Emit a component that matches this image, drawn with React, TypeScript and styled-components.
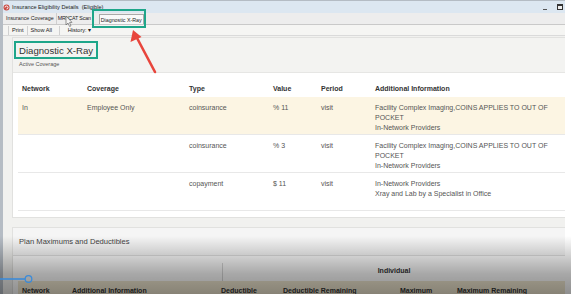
import React from "react";
import styled, { createGlobalStyle } from "styled-components";

const Global = createGlobalStyle`
  html, body { margin: 0; padding: 0; background: #fff; }
  body { font-family: "Liberation Sans", Arial, sans-serif; }
`;

const Stage = styled.div`
  position: relative;
  width: 571px;
  height: 294px;
  overflow: hidden;
  background: #ffffff;
`;

const Window = styled.div`
  width: 565px;
  height: 294px;
  display: flex;
  flex-direction: column;
  background: #f1f1ef;
  border-left: 3px solid #b5bcc4;
  box-sizing: border-box;
`;

const TitleBar = styled.div`
  height: 13px;
  flex: none;
  display: flex;
  align-items: center;
  gap: 2px;
  padding: 0 2px 0 0;
  background: #dce7f1;
  border-top: 1px solid #b4bcc4;
  box-sizing: border-box;
  font-size: 5.6px;
  color: #222;
`;

const TitleText = styled.span`
  flex: 1;
  white-space: nowrap;
`;

const WinButtons = styled.div`
  display: flex;
  align-items: center;
  gap: 10px;
`;

const MinBtn = styled.span`
  width: 4px;
  height: 1px;
  margin-top: 4px;
  background: #555;
`;

const MaxBtn = styled.span`
  width: 4px;
  height: 3px;
  border: 1px solid #333;
  border-top-width: 2px;
  background: #eee;
`;

const TabBar = styled.div`
  height: 12px;
  flex: none;
  display: flex;
  align-items: flex-end;
  padding-left: 1px;
  background: #ededed;
  border-bottom: 1px solid #c9c9c9;
  box-sizing: border-box;
`;

const Tab = styled.div<{ $active?: boolean; $tight?: boolean }>`
  height: ${(p) => (p.$active ? 10 : 11)}px;
  line-height: ${(p) => (p.$active ? 10 : 11)}px;
  padding: 0 ${(p) => (p.$tight ? 1 : 2)}px;
  font-size: 5.3px;
  letter-spacing: ${(p) => (p.$tight ? "-0.15px" : "0")};
  color: #222;
  white-space: nowrap;
  box-sizing: border-box;
  border-right: 1px solid #cfcfcf;
  ${(p) =>
    p.$active
      ? `background:#f9f9f9;border:1px solid #a9a9a9;border-bottom:none;margin-left:6px;padding:0 1px;`
      : ""}
`;

const Toolbar = styled.div`
  height: 11px;
  flex: none;
  display: flex;
  align-items: center;
  padding-left: 5px;
  background: #f5f5f3;
  border-bottom: 1px solid #dadada;
  box-sizing: border-box;
  font-size: 5.6px;
  color: #222;
`;

const ToolItem = styled.span<{ $gap?: number }>`
  padding: 0 3px;
  margin-left: ${(p) => p.$gap ?? 0}px;
  border-left: 1px solid #d0d0d0;
  line-height: 9px;
  white-space: nowrap;
`;

const Content = styled.div`
  flex: 1;
  display: flex;
  flex-direction: column;
  gap: 9px;
  padding: 1px 0 0 9px;
  background: #f1f1ef;
  min-height: 0;
`;

const Card = styled.div`
  background: #ffffff;
  border: 1px solid #e1e1df;
  border-right: none;
  display: flex;
  flex-direction: column;
  flex: none;
`;

const CardHead = styled.div`
  height: 35px;
  padding: 2px 0 0 1px;
  background: #f3f3f1;
  border-bottom: 1px solid #e6e6e4;
  box-sizing: border-box;
`;

const TitleBox = styled.div`
  display: inline-block;
  border: 2px solid #1fa68a;
  padding: 2px 3px 1px 3px;
  font-size: 9.6px;
  color: #333;
  line-height: 11px;
`;

const SubTitle = styled.div`
  margin: 2px 0 0 5px;
  font-size: 5.5px;
  color: #555;
`;

const Table = styled.div`
  margin: 7px 0 6px 5px;
  display: flex;
  flex-direction: column;
`;

const cols = "65px 102px 84px 48px 54px 1fr";

const HeadRow = styled.div`
  display: grid;
  grid-template-columns: ${cols};
  height: 17px;
  align-items: center;
  font-size: 7px;
  font-weight: bold;
  color: #333;
`;

const Row = styled.div<{ $hl?: boolean }>`
  display: grid;
  grid-template-columns: ${cols};
  height: 38px;
  padding-top: 6px;
  box-sizing: border-box;
  border-bottom: 1px solid #e8e8e8;
  background: ${(p) => (p.$hl ? "#fcf5e3" : "#ffffff")};
  font-size: 7px;
  line-height: 10px;
  color: #555;
`;

const Cell = styled.div`
  padding-left: 4px;
`;

const InfoLine = styled.div`
  max-width: 180px;
`;

const PlanTitle = styled.div`
  height: 27px;
  display: flex;
  align-items: center;
  padding-left: 6px;
  font-size: 7.6px;
  color: #444;
  background: #f5f5f5;
  border-bottom: 1px solid #e0e0e0;
`;

const GroupRow = styled.div`
  display: grid;
  grid-template-columns: 204px 1fr;
  height: 25px;
  margin-left: 5px;
`;

const GroupCell = styled.div<{ $sep?: boolean }>`
  display: flex;
  align-items: flex-end;
  justify-content: center;
  padding-bottom: 7px;
  box-sizing: border-box;
  font-size: 7px;
  font-weight: bold;
  color: #333;
  ${(p) => (p.$sep ? "border-left: 1px solid #d8d8d8; margin-top: 7px;" : "")}
`;

const planCols = "50px 149px 62px 117px 57px 1fr";

const PlanHeadRow = styled.div`
  display: grid;
  grid-template-columns: ${planCols};
  height: 18px;
  margin-left: 5px;
  align-items: center;
  background: #f1e9d2;
  font-size: 7px;
  font-weight: bold;
  color: #333;
`;

const Shade = styled.div`
  position: absolute;
  left: 0;
  right: 0;
  top: 236px;
  bottom: 0;
  pointer-events: none;
  background: linear-gradient(
    to bottom,
    rgba(0, 0, 0, 0) 0%,
    rgba(0, 0, 0, 0.16) 30%,
    rgba(0, 0, 0, 0.34) 65%,
    rgba(0, 0, 0, 0.44) 100%
  );
`;

const TabHighlight = styled.div`
  position: absolute;
  left: 92px;
  top: 9px;
  width: 54px;
  height: 19px;
  border: 2px solid #1fa68a;
  box-sizing: border-box;
`;

const Overlay = styled.svg`
  position: absolute;
  left: 0;
  top: 0;
  pointer-events: none;
`;

const tableRows = [
  {
    hl: true,
    network: "In",
    coverage: "Employee Only",
    type: "coinsurance",
    value: "% 11",
    period: "visit",
    info: ["Facility Complex Imaging,COINS APPLIES TO OUT OF POCKET", "In-Network Providers"],
  },
  {
    hl: false,
    network: "",
    coverage: "",
    type: "coinsurance",
    value: "% 3",
    period: "visit",
    info: ["Facility Complex Imaging,COINS APPLIES TO OUT OF POCKET", "In-Network Providers"],
  },
  {
    hl: false,
    network: "",
    coverage: "",
    type: "copayment",
    value: "$ 11",
    period: "visit",
    info: ["In-Network Providers", "Xray and Lab by a Specialist in Office"],
  },
];

export default function App() {
  return (
    <Stage>
      <Global />
      <Window>
        <TitleBar>
          <svg width="7" height="7" viewBox="0 0 7 7">
            <circle cx="3.5" cy="3.5" r="3" fill="#c9483f" />
            <path d="M2 3.5 A1.5 1.5 0 1 1 3.5 5" stroke="#fff" strokeWidth="1" fill="none" />
          </svg>
          <TitleText>Insurance Eligibility Details&nbsp; (Eligible)</TitleText>
          <WinButtons>
            <MinBtn />
            <MaxBtn />
          </WinButtons>
        </TitleBar>
        <TabBar>
          <Tab>Insurance Coverage</Tab>
          <Tab $tight>MRI/CAT Scan</Tab>
          <Tab $active>Diagnostic X-Ray</Tab>
        </TabBar>
        <Toolbar>
          <ToolItem>Print</ToolItem>
          <ToolItem>Show All</ToolItem>
          <ToolItem $gap={4}>&nbsp;&nbsp;&nbsp;History: ▾</ToolItem>
        </Toolbar>
        <Content>
          <Card>
            <CardHead>
              <TitleBox>Diagnostic X-Ray</TitleBox>
              <SubTitle>Active Coverage</SubTitle>
            </CardHead>
            <Table>
              <HeadRow>
                <Cell>Network</Cell>
                <Cell>Coverage</Cell>
                <Cell>Type</Cell>
                <Cell>Value</Cell>
                <Cell>Period</Cell>
                <Cell>Additional Information</Cell>
              </HeadRow>
              {tableRows.map((r, i) => (
                <Row key={i} $hl={r.hl}>
                  <Cell>{r.network}</Cell>
                  <Cell>{r.coverage}</Cell>
                  <Cell>{r.type}</Cell>
                  <Cell>{r.value}</Cell>
                  <Cell>{r.period}</Cell>
                  <Cell>
                    {r.info.map((l, j) => (
                      <InfoLine key={j}>{l}</InfoLine>
                    ))}
                  </Cell>
                </Row>
              ))}
            </Table>
          </Card>
          <Card>
            <PlanTitle>Plan Maximums and Deductibles</PlanTitle>
            <GroupRow>
              <GroupCell />
              <GroupCell $sep>Individual</GroupCell>
            </GroupRow>
            <PlanHeadRow>
              <Cell>Network</Cell>
              <Cell>Additional Information</Cell>
              <Cell>Deductible</Cell>
              <Cell>Deductible Remaining</Cell>
              <Cell>Maximum</Cell>
              <Cell>Maximum Remaining</Cell>
            </PlanHeadRow>
          </Card>
        </Content>
      </Window>
      <Shade />
      <TabHighlight />
      <Overlay width="571" height="294" viewBox="0 0 571 294">
        <line x1="155" y1="72" x2="137" y2="38" stroke="#e8453c" strokeWidth="2.6" strokeLinecap="round" />
        <polygon points="133,30 130.5,42 141.5,37" fill="#e8453c" />
        <line x1="0" y1="279" x2="25" y2="279" stroke="#3b8bd9" strokeWidth="1.6" />
        <circle cx="28.5" cy="279" r="3.3" fill="none" stroke="#3b8bd9" strokeWidth="1.3" />
        <path d="M66 16 L66 25 L68 23 L69.6 26.5 L71 25.8 L69.5 22.6 L72 22.4 Z" fill="#f4f4f4" stroke="#555" strokeWidth="0.6" />
      </Overlay>
    </Stage>
  );
}
